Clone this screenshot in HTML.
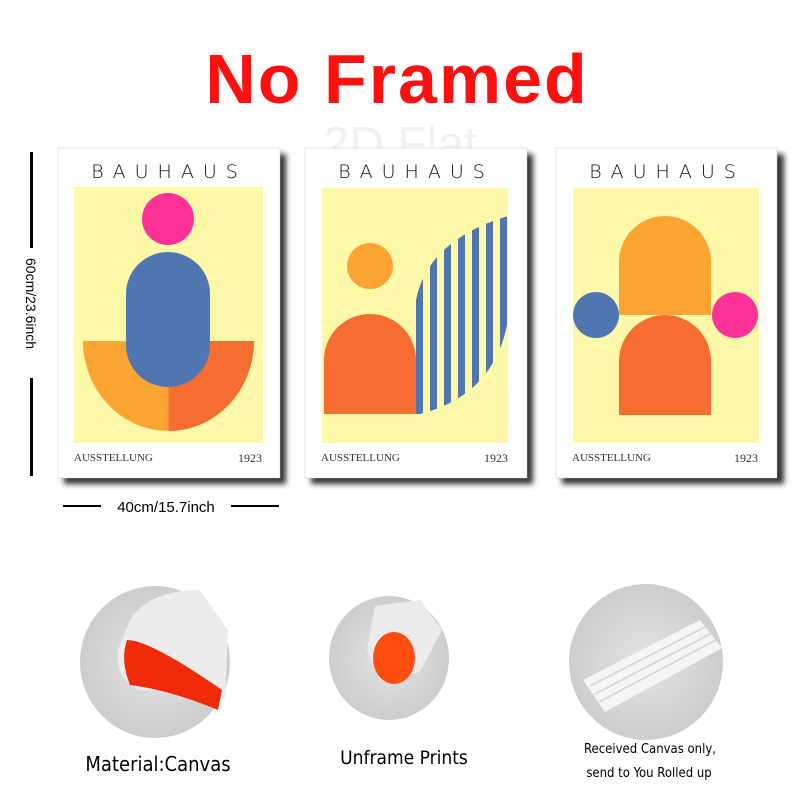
<!DOCTYPE html>
<html><head><meta charset="utf-8"><style>
body{margin:0;width:800px;height:800px;background:#fff;overflow:hidden;font-family:"Liberation Sans",sans-serif}
</style></head><body>
<svg width="800" height="800" viewBox="0 0 800 800" xmlns="http://www.w3.org/2000/svg">
<defs>
<filter id="sh" x="-10%" y="-10%" width="130%" height="130%"><feGaussianBlur stdDeviation="3"/></filter>
<radialGradient id="g1" cx="50%" cy="50%" r="50%"><stop offset="0" stop-color="#e4e4e4"/><stop offset="1" stop-color="#cdcdcd"/></radialGradient>
<clipPath id="c2"><path d="M416 414 L416 300 Q428 240 508 216 L508 320 Q495 395 420 414 Z"/></clipPath>
</defs>
<text x="397" y="103" text-anchor="middle" font-family="Liberation Sans" font-weight="bold" font-size="70" fill="#ff1010" letter-spacing="2">No Framed</text>
<text x="400" y="160" text-anchor="middle" font-family="Liberation Sans" font-size="48" fill="#eee" opacity="0.8">2D Flat</text>

<rect x="30" y="152" width="3" height="96" fill="#000"/>
<rect x="30" y="378" width="3" height="98" fill="#000"/>
<text x="0" y="0" transform="translate(26,258) rotate(90)" font-size="14" fill="#000">60cm/23.6inch</text>
<rect x="63" y="505" width="38" height="2" fill="#000"/>
<rect x="231" y="505" width="48" height="2" fill="#000"/>
<text x="166" y="512" text-anchor="middle" font-size="15" fill="#000">40cm/15.7inch</text>

<rect x="64" y="154" width="222" height="330" fill="#333" filter="url(#sh)"/>
<rect x="311" y="154" width="222" height="330" fill="#333" filter="url(#sh)"/>
<rect x="562" y="154" width="222" height="330" fill="#333" filter="url(#sh)"/>

<rect x="58" y="148" width="222" height="330" fill="#fff" stroke="#ccc" stroke-width="0.5"/>
<text x="169" y="178" text-anchor="middle" font-family="DejaVu Sans" font-weight="200" font-size="19" letter-spacing="9" fill="#111">BAUHAUS</text>
<rect x="74" y="187" width="189" height="256" fill="#fef9a8"/>
<path d="M83 341 H254 A85.5 90 0 0 1 83 341 Z" fill="#fba432"/>
<path d="M168.5 341 H254 A85.5 90 0 0 1 168.5 431 Z" fill="#f56d30"/>
<circle cx="168" cy="219" r="26" fill="#fd3299"/>
<path d="M126 294 A42 42 0 0 1 210 294 V345 A42 42 0 0 1 126 345 Z" fill="#4f76b0"/>
<text x="74" y="461" font-family="Liberation Serif" font-size="11" fill="#333">AUSSTELLUNG</text>
<text x="262" y="462" text-anchor="end" font-family="Liberation Serif" font-size="12" fill="#333">1923</text>

<rect x="305" y="148" width="222" height="330" fill="#fff" stroke="#ccc" stroke-width="0.5"/>
<text x="416" y="178" text-anchor="middle" font-family="DejaVu Sans" font-weight="200" font-size="19" letter-spacing="9" fill="#111">BAUHAUS</text>
<rect x="322" y="188" width="186" height="255" fill="#fef9a8"/>
<circle cx="370" cy="266" r="23" fill="#fba432"/>
<path d="M324 414 V360 A46 46 0 0 1 416 360 V414 Z" fill="#f56d30"/>
<g clip-path="url(#c2)" fill="#4f76b0">
<rect x="416" y="200" width="7" height="220"/><rect x="430" y="200" width="7" height="220"/><rect x="444" y="200" width="7" height="220"/><rect x="458" y="200" width="7" height="220"/><rect x="472" y="200" width="7" height="220"/><rect x="486" y="200" width="7" height="220"/><rect x="500" y="200" width="7" height="220"/>
</g>
<text x="321" y="461" font-family="Liberation Serif" font-size="11" fill="#333">AUSSTELLUNG</text>
<text x="508" y="462" text-anchor="end" font-family="Liberation Serif" font-size="12" fill="#333">1923</text>

<rect x="556" y="148" width="221" height="330" fill="#fff" stroke="#ccc" stroke-width="0.5"/>
<text x="667" y="178" text-anchor="middle" font-family="DejaVu Sans" font-weight="200" font-size="19" letter-spacing="9" fill="#111">BAUHAUS</text>
<rect x="573" y="188" width="186" height="255" fill="#fef9a8"/>
<path d="M619 315 V262 A46 46 0 0 1 711 262 V315 Z" fill="#fba432"/>
<path d="M619 415 V361 A46 46 0 0 1 711 361 V415 Z" fill="#f56d30"/>
<circle cx="596" cy="315" r="23" fill="#4f76b0"/>
<circle cx="735" cy="315" r="23" fill="#fd3299"/>
<text x="572" y="461" font-family="Liberation Serif" font-size="11" fill="#333">AUSSTELLUNG</text>
<text x="758" y="462" text-anchor="end" font-family="Liberation Serif" font-size="12" fill="#333">1923</text>

<ellipse cx="155" cy="662" rx="75" ry="76" fill="url(#g1)"/>
<path d="M130 620 Q150 590 200 590 L228 630 L225 700 Q180 690 140 690 Q115 680 118 650 Z" fill="#ececec"/>
<path d="M127 640 Q150 640 222 690 L218 710 Q170 690 130 685 Q120 660 127 640 Z" fill="#f22a0c"/>
<ellipse cx="389" cy="658" rx="60" ry="62" fill="url(#g1)"/>
<path d="M375 606 L420 600 L442 630 L420 672 L380 680 L367 650 Z" fill="#ebebeb"/>
<ellipse cx="394" cy="658" rx="21" ry="26" fill="#ff4e10"/>
<ellipse cx="646" cy="662" rx="77" ry="78" fill="url(#g1)"/>
<path d="M583 680 L700 620 L722 648 L605 712 Z" fill="#f5f5f5"/>
<g stroke="#d2d2d2" stroke-width="1.5"><line x1="590" y1="686" x2="707" y2="626"/><line x1="595" y1="694" x2="712" y2="633"/><line x1="599" y1="702" x2="716" y2="640"/></g>
<text x="158" y="771" text-anchor="middle" font-family="DejaVu Sans Condensed, Liberation Sans" font-size="20" fill="#000">Material:Canvas</text>
<text x="404" y="764" text-anchor="middle" font-family="DejaVu Sans Condensed, Liberation Sans" font-size="19" fill="#000">Unframe  Prints</text>
<text x="650" y="753" text-anchor="middle" font-family="DejaVu Sans Condensed, Liberation Sans" font-size="13" fill="#000">Received Canvas only,</text>
<text x="649" y="777" text-anchor="middle" font-family="DejaVu Sans Condensed, Liberation Sans" font-size="13" fill="#000">send to You Rolled up</text>
</svg>
</body></html>
